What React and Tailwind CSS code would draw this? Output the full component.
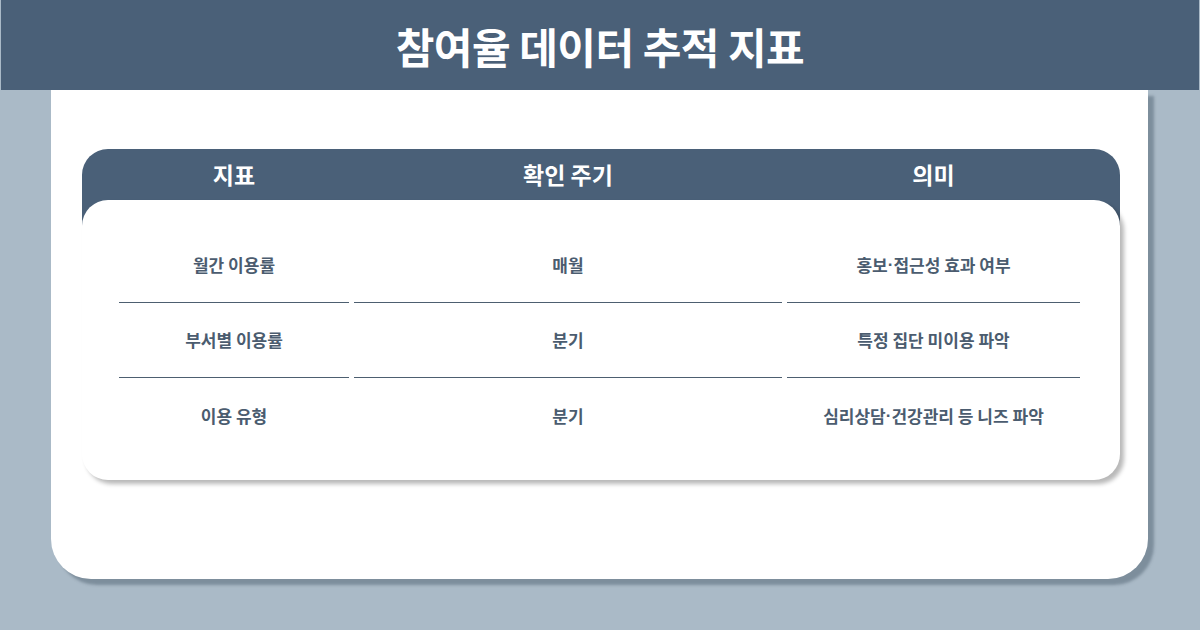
const Dot = () => <span style={{ fontFamily: '"Liberation Sans", sans-serif' }}>·</span>;

const rows = [
  ["월간 이용률", "매월", <>홍보<Dot />접근성 효과 여부</>],
  ["부서별 이용률", "분기", "특정 집단 미이용 파악"],
  ["이용 유형", "분기", <>심리상담<Dot />건강관리 등 니즈 파악</>],
];

export default function App() {
  return (
    <div
      className="w-[1200px] h-[630px] bg-[#aabac7] overflow-hidden"
      style={{ fontFamily: '"Noto Sans CJK KR", "Noto Sans", sans-serif' }}
    >
      <div className="h-[90px] mx-px bg-[#4a6078] flex items-center justify-center">
        <h1 className="text-[42px] font-bold text-white tracking-[-0.5px]">참여율 데이터 추적 지표</h1>
      </div>

      <div className="ml-[51px] w-[1097px] h-[489px] bg-white rounded-b-[40px] shadow-[6px_6px_3px_rgba(70,88,105,0.45)] pt-[59px] pl-[31px]">
        <div className="w-[1038px]">
          <div className="h-[77px] bg-[#4a6078] rounded-t-[26px] px-[37px] grid grid-cols-[230px_428px_293px] gap-x-[5px] text-white text-[23px] font-bold">
            <div className="h-[51px] flex items-center justify-center">지표</div>
            <div className="h-[51px] flex items-center justify-center">확인 주기</div>
            <div className="h-[51px] flex items-center justify-center">의미</div>
          </div>
          <div className="relative -mt-[26px] h-[280px] bg-white rounded-[26px] shadow-[4px_4px_4px_rgba(0,0,0,0.28)] pt-[28px] px-[37px]">
            <div className="grid grid-cols-[230px_428px_293px] gap-x-[5px]">
              {rows.map((r, i) =>
                r.map((c, j) => (
                  <div
                    key={i + "-" + j}
                    className={
                      "h-[75px] flex items-center justify-center text-[17px] font-semibold text-[#4b5c6f] " +
                      (i < rows.length - 1 ? "border-b border-[#4d5f70]" : "")
                    }
                  >
                    {c}
                  </div>
                ))
              )}
            </div>
          </div>
        </div>
      </div>
    </div>
  );
}
